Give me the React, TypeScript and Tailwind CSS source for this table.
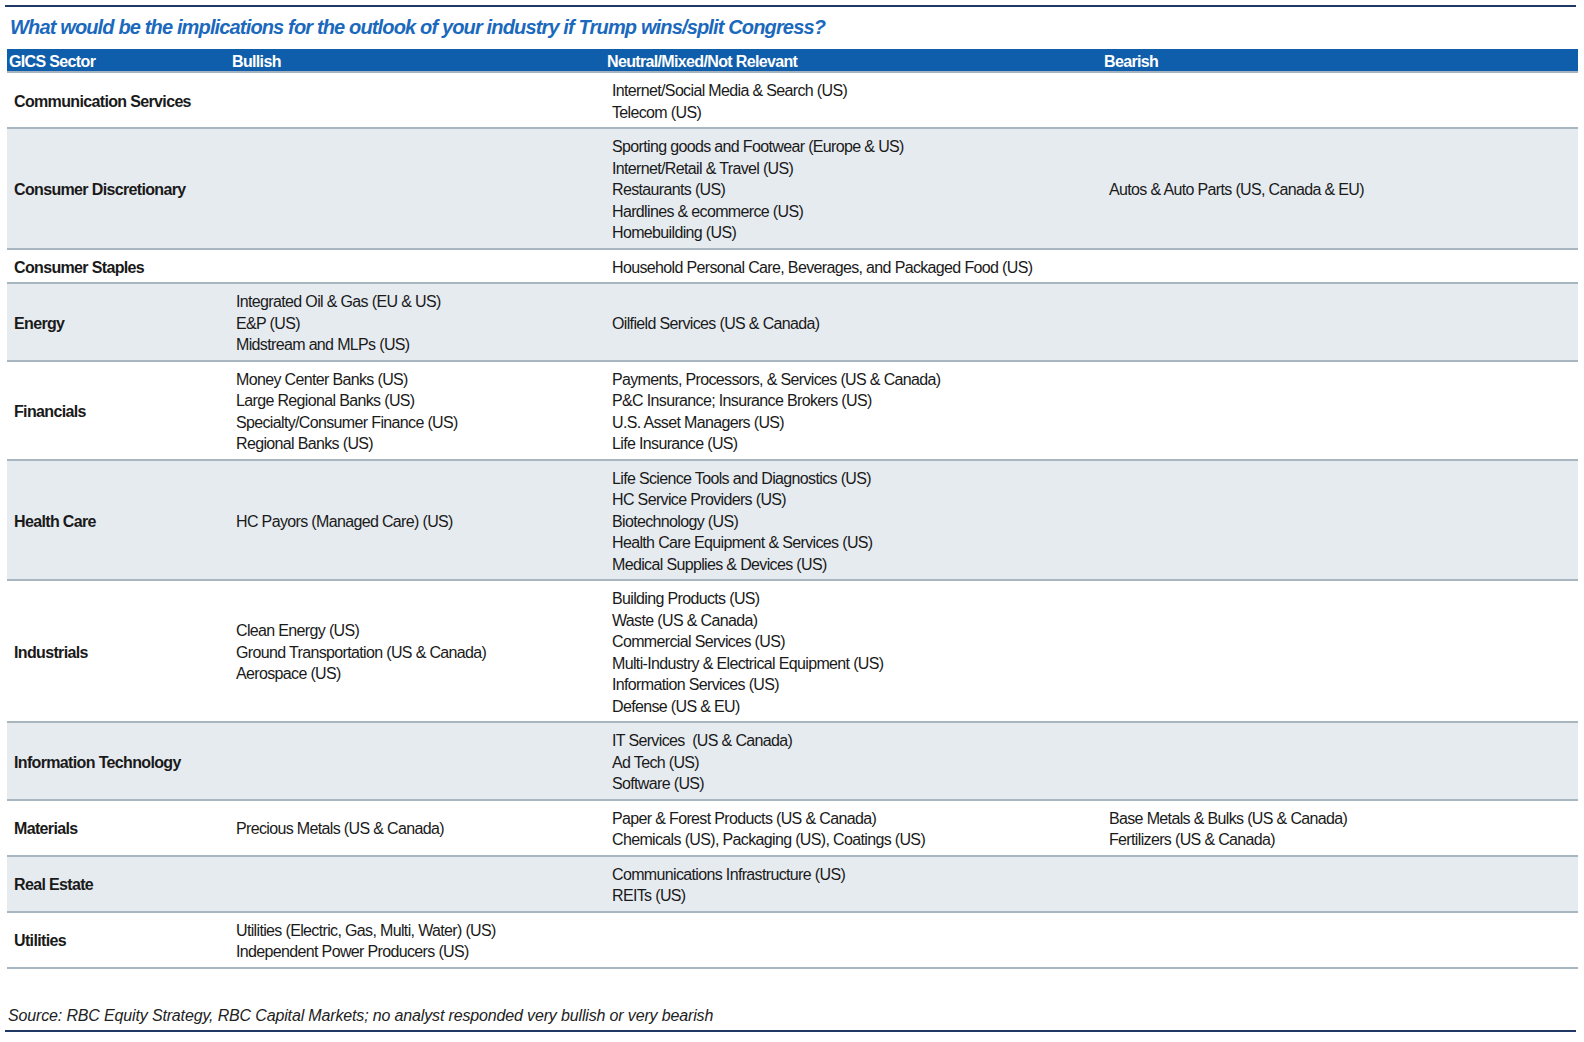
type Row = {
  sector: string;
  bullish: string[];
  neutral: string[];
  bearish: string[];
};

const rows: Row[] = [
  {
    sector: "Communication Services",
    bullish: [],
    neutral: ["Internet/Social Media & Search (US)", "Telecom (US)"],
    bearish: [],
  },
  {
    sector: "Consumer Discretionary",
    bullish: [],
    neutral: [
      "Sporting goods and Footwear (Europe & US)",
      "Internet/Retail & Travel (US)",
      "Restaurants (US)",
      "Hardlines & ecommerce (US)",
      "Homebuilding (US)",
    ],
    bearish: ["Autos & Auto Parts (US, Canada & EU)"],
  },
  {
    sector: "Consumer Staples",
    bullish: [],
    neutral: ["Household Personal Care, Beverages, and Packaged Food (US)"],
    bearish: [],
  },
  {
    sector: "Energy",
    bullish: ["Integrated Oil & Gas (EU & US)", "E&P (US)", "Midstream and MLPs (US)"],
    neutral: ["Oilfield Services (US & Canada)"],
    bearish: [],
  },
  {
    sector: "Financials",
    bullish: [
      "Money Center Banks (US)",
      "Large Regional Banks (US)",
      "Specialty/Consumer Finance (US)",
      "Regional Banks (US)",
    ],
    neutral: [
      "Payments, Processors, & Services (US & Canada)",
      "P&C Insurance; Insurance Brokers (US)",
      "U.S. Asset Managers (US)",
      "Life Insurance (US)",
    ],
    bearish: [],
  },
  {
    sector: "Health Care",
    bullish: ["HC Payors (Managed Care) (US)"],
    neutral: [
      "Life Science Tools and Diagnostics (US)",
      "HC Service Providers (US)",
      "Biotechnology (US)",
      "Health Care Equipment & Services (US)",
      "Medical Supplies & Devices (US)",
    ],
    bearish: [],
  },
  {
    sector: "Industrials",
    bullish: ["Clean Energy (US)", "Ground Transportation (US & Canada)", "Aerospace (US)"],
    neutral: [
      "Building Products (US)",
      "Waste (US & Canada)",
      "Commercial Services (US)",
      "Multi-Industry & Electrical Equipment (US)",
      "Information Services (US)",
      "Defense (US & EU)",
    ],
    bearish: [],
  },
  {
    sector: "Information Technology",
    bullish: [],
    neutral: ["IT Services  (US & Canada)", "Ad Tech (US)", "Software (US)"],
    bearish: [],
  },
  {
    sector: "Materials",
    bullish: ["Precious Metals (US & Canada)"],
    neutral: ["Paper & Forest Products (US & Canada)", "Chemicals (US), Packaging (US), Coatings (US)"],
    bearish: ["Base Metals & Bulks (US & Canada)", "Fertilizers (US & Canada)"],
  },
  {
    sector: "Real Estate",
    bullish: [],
    neutral: ["Communications Infrastructure (US)", "REITs (US)"],
    bearish: [],
  },
  {
    sector: "Utilities",
    bullish: ["Utilities (Electric, Gas, Multi, Water) (US)", "Independent Power Producers (US)"],
    neutral: [],
    bearish: [],
  },
];

function Cell({ items, className }: { items: string[]; className: string }) {
  return (
    <div className={className}>
      {items.map((item) => (
        <div key={item} className="whitespace-pre">
          {item}
        </div>
      ))}
    </div>
  );
}

export default function App() {
  return (
    <div
      className="w-[1584px] h-[1042px] bg-white text-[#1a1a1a] text-[16px] leading-[21.5px] tracking-[-0.65px]"
      style={{ fontFamily: '"Liberation Sans", Arial, sans-serif' }}
    >
      <div className="pt-[5px] pl-[5px]">
        <div className="w-[1571px] h-[2px] bg-[#1f3864]" />
      </div>

      <div className="pl-[10px] mt-[8px] mb-[10px] h-[24px] leading-[24px] text-[20px] font-bold italic text-[#1a69bd] tracking-[-0.85px]">
        What would be the implications for the outlook of your industry if Trump wins/split Congress?
      </div>

      <div className="ml-[7px] w-[1571px]">
        {/* header */}
        <div className="grid grid-cols-[225px_375px_497px_474px] h-[24px] pt-[3px] bg-[#0f5eab] border-b-2 border-[#a5b3c0] text-white font-bold leading-[20px]">
          <div className="pl-[2px]">GICS Sector</div>
          <div>Bullish</div>
          <div>Neutral/Mixed/Not Relevant</div>
          <div>Bearish</div>
        </div>

        {rows.map((row, i) => (
          <div
            key={row.sector}
            className={
              "grid grid-cols-[225px_375px_497px_474px] items-center pt-[7px] pb-[4px] border-b-2 border-[#a8b6bf] " +
              (i % 2 === 1 ? "bg-[#e6ebf0]" : "bg-white")
            }
          >
            <div className="pl-[7px] font-bold">{row.sector}</div>
            <Cell items={row.bullish} className="pl-[4px]" />
            <Cell items={row.neutral} className="pl-[5px]" />
            <Cell items={row.bearish} className="pl-[5px]" />
          </div>
        ))}
      </div>

      <div className="pl-[8px] mt-[37px] h-[20px] leading-[20px] italic text-[#222] tracking-[-0.15px]">
        Source: RBC Equity Strategy, RBC Capital Markets; no analyst responded very bullish or very bearish
      </div>
      <div className="pl-[5px] mt-[4px]">
        <div className="w-[1571px] h-[2px] bg-[#1f3864]" />
      </div>
    </div>
  );
}
